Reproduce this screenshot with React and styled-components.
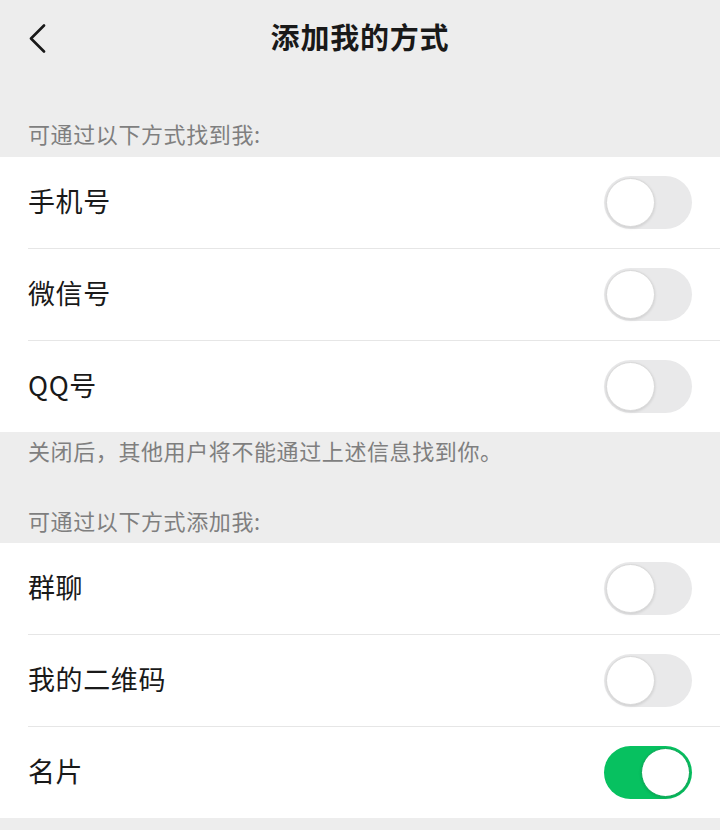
import React, { useState } from 'react';
import styled, { createGlobalStyle } from 'styled-components';

const GlobalStyle = createGlobalStyle`
  html, body {
    margin: 0;
    padding: 0;
    background: #ededed;
  }
  body {
    font-family: "Noto Sans CJK SC", "Noto Sans", sans-serif;
    -webkit-font-smoothing: antialiased;
  }
`;

/** page shell **/
const Page = styled.div`
  width: 720px;
  min-height: 830px;
  background: #ededed;
  display: flex;
  flex-direction: column;
`;

/** top navigation bar **/
const NavBar = styled.div`
  height: 76px;
  display: grid;
  grid-template-columns: 1fr auto 1fr;
  align-items: center;
  padding: 0 28px;
`;

const BackButton = styled.div`
  display: flex;
  align-items: center;
  cursor: pointer;
`;

const Title = styled.div`
  font-size: 29px;
  font-weight: 700;
  color: #191919;
  letter-spacing: 0.8px;
  padding-bottom: 4px;
`;

/** grey captions above and below groups **/
const Caption = styled.div`
  padding: ${props => props.pad || '0'};
  padding-left: 28px;
  font-size: 22px;
  line-height: 30px;
  color: #7f7f7f;
  letter-spacing: 0.6px;
`;

const Group = styled.div`
  background: #fff;
`;

const Row = styled.div`
  padding-left: 28px;
`;

const RowInner = styled.div`
  height: 91px;
  display: flex;
  align-items: center;
  justify-content: space-between;
  padding-right: 28px;
  border-bottom: ${props => (props.last ? 'none' : '1px solid #e6e6e6')};
`;

const Label = styled.div`
  font-size: 27px;
  color: #191919;
  letter-spacing: 0.6px;
  padding-bottom: 5px;
`;

/** switch **/
const Track = styled.div`
  width: 88px;
  height: 53px;
  border-radius: 27px;
  box-sizing: border-box;
  background: ${props => (props.on ? '#07c160' : '#e9e9ea')};
  display: flex;
  align-items: center;
  justify-content: ${props => (props.on ? 'flex-end' : 'flex-start')};
  padding: 2px;
  margin-bottom: 1px;
  cursor: pointer;
`;

const Knob = styled.div`
  width: 49px;
  height: 49px;
  border-radius: 50%;
  background: #fff;
  box-sizing: border-box;
  border: 1px solid ${props => (props.on ? '#0aa755' : '#d9d9d9')};
  box-shadow: 0 1px 3px rgba(0, 0, 0, 0.12);
`;

const Toggle = ({ on, onClick }) => (
  <Track on={on ? 1 : 0} onClick={onClick}>
    <Knob on={on ? 1 : 0} />
  </Track>
);

const findItems = ['手机号', '微信号', 'QQ号'];
const addItems = ['群聊', '我的二维码', '名片'];

export default function App() {
  const [state, setState] = useState({
    手机号: false,
    微信号: false,
    QQ号: false,
    群聊: false,
    我的二维码: false,
    名片: true
  });

  const flip = key => setState(s => ({ ...s, [key]: !s[key] }));

  const renderGroup = items => (
    <Group>
      {items.map((item, i) => (
        <Row key={item}>
          <RowInner last={i === items.length - 1}>
            <Label>{item}</Label>
            <Toggle on={state[item]} onClick={() => flip(item)} />
          </RowInner>
        </Row>
      ))}
    </Group>
  );

  return (
    <Page>
      <GlobalStyle />
      <NavBar>
        <BackButton>
          <svg width="19" height="29" viewBox="0 0 19 29" fill="none">
            <polyline
              points="16,1.5 3,14.5 16,27.5"
              stroke="#191919"
              strokeWidth="2.6"
              strokeLinecap="round"
              strokeLinejoin="round"
            />
          </svg>
        </BackButton>
        <Title>添加我的方式</Title>
        <div />
      </NavBar>

      <Caption pad="42px 0 9px">可通过以下方式找到我:</Caption>
      {renderGroup(findItems)}

      <Caption pad="3px 0 0">关闭后，其他用户将不能通过上述信息找到你。</Caption>
      <Caption pad="40px 0 8px">可通过以下方式添加我:</Caption>
      {renderGroup(addItems)}
    </Page>
  );
}
